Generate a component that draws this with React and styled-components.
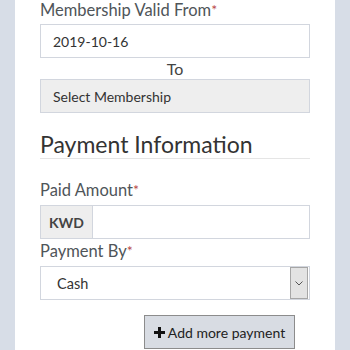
import React from "react";
import styled, { createGlobalStyle } from "styled-components";

const Global = createGlobalStyle`
  html, body { margin: 0; padding: 0; background: #d7dde7; }
  body { font-family: "Lato", "Open Sans", sans-serif; color: #333; }
  #root { height: 350px; overflow: hidden; }
`;

const Panel = styled.div`
  margin: 0 15px;
  background: #fff;
  padding: 0 25px;
  height: 350px;
  overflow: hidden;
`;

const Label = styled.div`
  font-size: 16.5px;
  line-height: 20px;
  color: #4f5559;
  margin-top: ${(p) => p.$mt || 0}px;
  margin-bottom: ${(p) => p.$mb || 4}px;
  height: 20px;
`;

const Req = styled.span`
  color: #b94a48;
  font-size: 14px;
  vertical-align: top;
`;

const Field = styled.div`
  box-sizing: border-box;
  height: 34px;
  border: 1px solid #d2d6de;
  background: ${(p) => (p.$disabled ? "#eeeeee" : "#fff")};
  padding: 0 12px;
  display: flex;
  align-items: center;
  font-size: 14px;
  color: #333;
`;

const ToLine = styled.div`
  height: 21px;
  line-height: 22px;
  text-align: center;
  font-size: 16px;
  color: #444;
`;

const Heading = styled.h3`
  margin: 20px 0 0;
  font-size: 23px;
  font-weight: 400;
  line-height: 23px;
  height: 25px;
  color: #333;
  border-bottom: 1px solid #e5e5e5;
`;

const Group = styled.div`
  display: flex;
  height: 34px;
  box-sizing: border-box;
  border: 1px solid #d2d6de;
`;

const Addon = styled.div`
  width: 52px;
  box-sizing: border-box;
  background: #eeeeee;
  border-right: 1px solid #d2d6de;
  display: flex;
  align-items: center;
  justify-content: center;
  font-size: 14px;
  font-weight: 700;
  color: #444;
`;

const GroupInput = styled.div`
  flex: 1;
  background: #fff;
`;

const Select = styled.div`
  box-sizing: border-box;
  height: 34px;
  border: 1px solid #d2d6de;
  display: flex;
  align-items: stretch;
  font-size: 14.5px;
  color: #333;
`;

const SelectText = styled.div`
  flex: 1;
  display: flex;
  align-items: center;
  padding-left: 16px;
`;

const Arrow = styled.div`
  width: 16px;
  margin: 0 1px 0 0;
  background: #e3e3e3;
  border: 1px solid #a6a6a6;
  display: flex;
  align-items: center;
  justify-content: center;
`;

const BtnRow = styled.div`
  display: flex;
  padding-left: 104px;
  margin-top: 15px;
`;

const Button = styled.div`
  box-sizing: border-box;
  width: 151px;
  height: 34px;
  background: #d8dce3;
  border: 1px solid #8c8c8c;
  display: flex;
  align-items: center;
  justify-content: center;
  gap: 3px;
  font-size: 14px;
  color: #222;
`;

const GreenBar = styled.div`
  margin: 1px 0 0 15px;
  width: 54px;
  border-top: 2px solid #1f7a4c;
`;

export default function App() {
  return (
    <>
      <Global />
      <Panel>
        <Label>
          Membership Valid From<Req>*</Req>
        </Label>
        <Field>2019-10-16</Field>
        <ToLine>To</ToLine>
        <Field $disabled>Select Membership</Field>
        <Heading>Payment Information</Heading>
        <Label $mt={21} $mb={5}>
          Paid Amount<Req>*</Req>
        </Label>
        <Group>
          <Addon>KWD</Addon>
          <GroupInput />
        </Group>
        <Label $mt={2} $mb={5}>
          Payment By<Req>*</Req>
        </Label>
        <Select>
          <SelectText>Cash</SelectText>
          <Arrow>
            <svg width="8" height="5" viewBox="0 0 8 5">
              <path d="M0.5 0.5 L4 4 L7.5 0.5" fill="none" stroke="#555" strokeWidth="1" />
            </svg>
          </Arrow>
        </Select>
        <BtnRow>
          <Button>
            <svg width="11" height="11" viewBox="0 0 11 11">
              <path d="M4 0h3v4h4v3H7v4H4V7H0V4h4z" fill="#111" />
            </svg>
            Add more payment
          </Button>
        </BtnRow>
        <GreenBar />
      </Panel>
    </>
  );
}
